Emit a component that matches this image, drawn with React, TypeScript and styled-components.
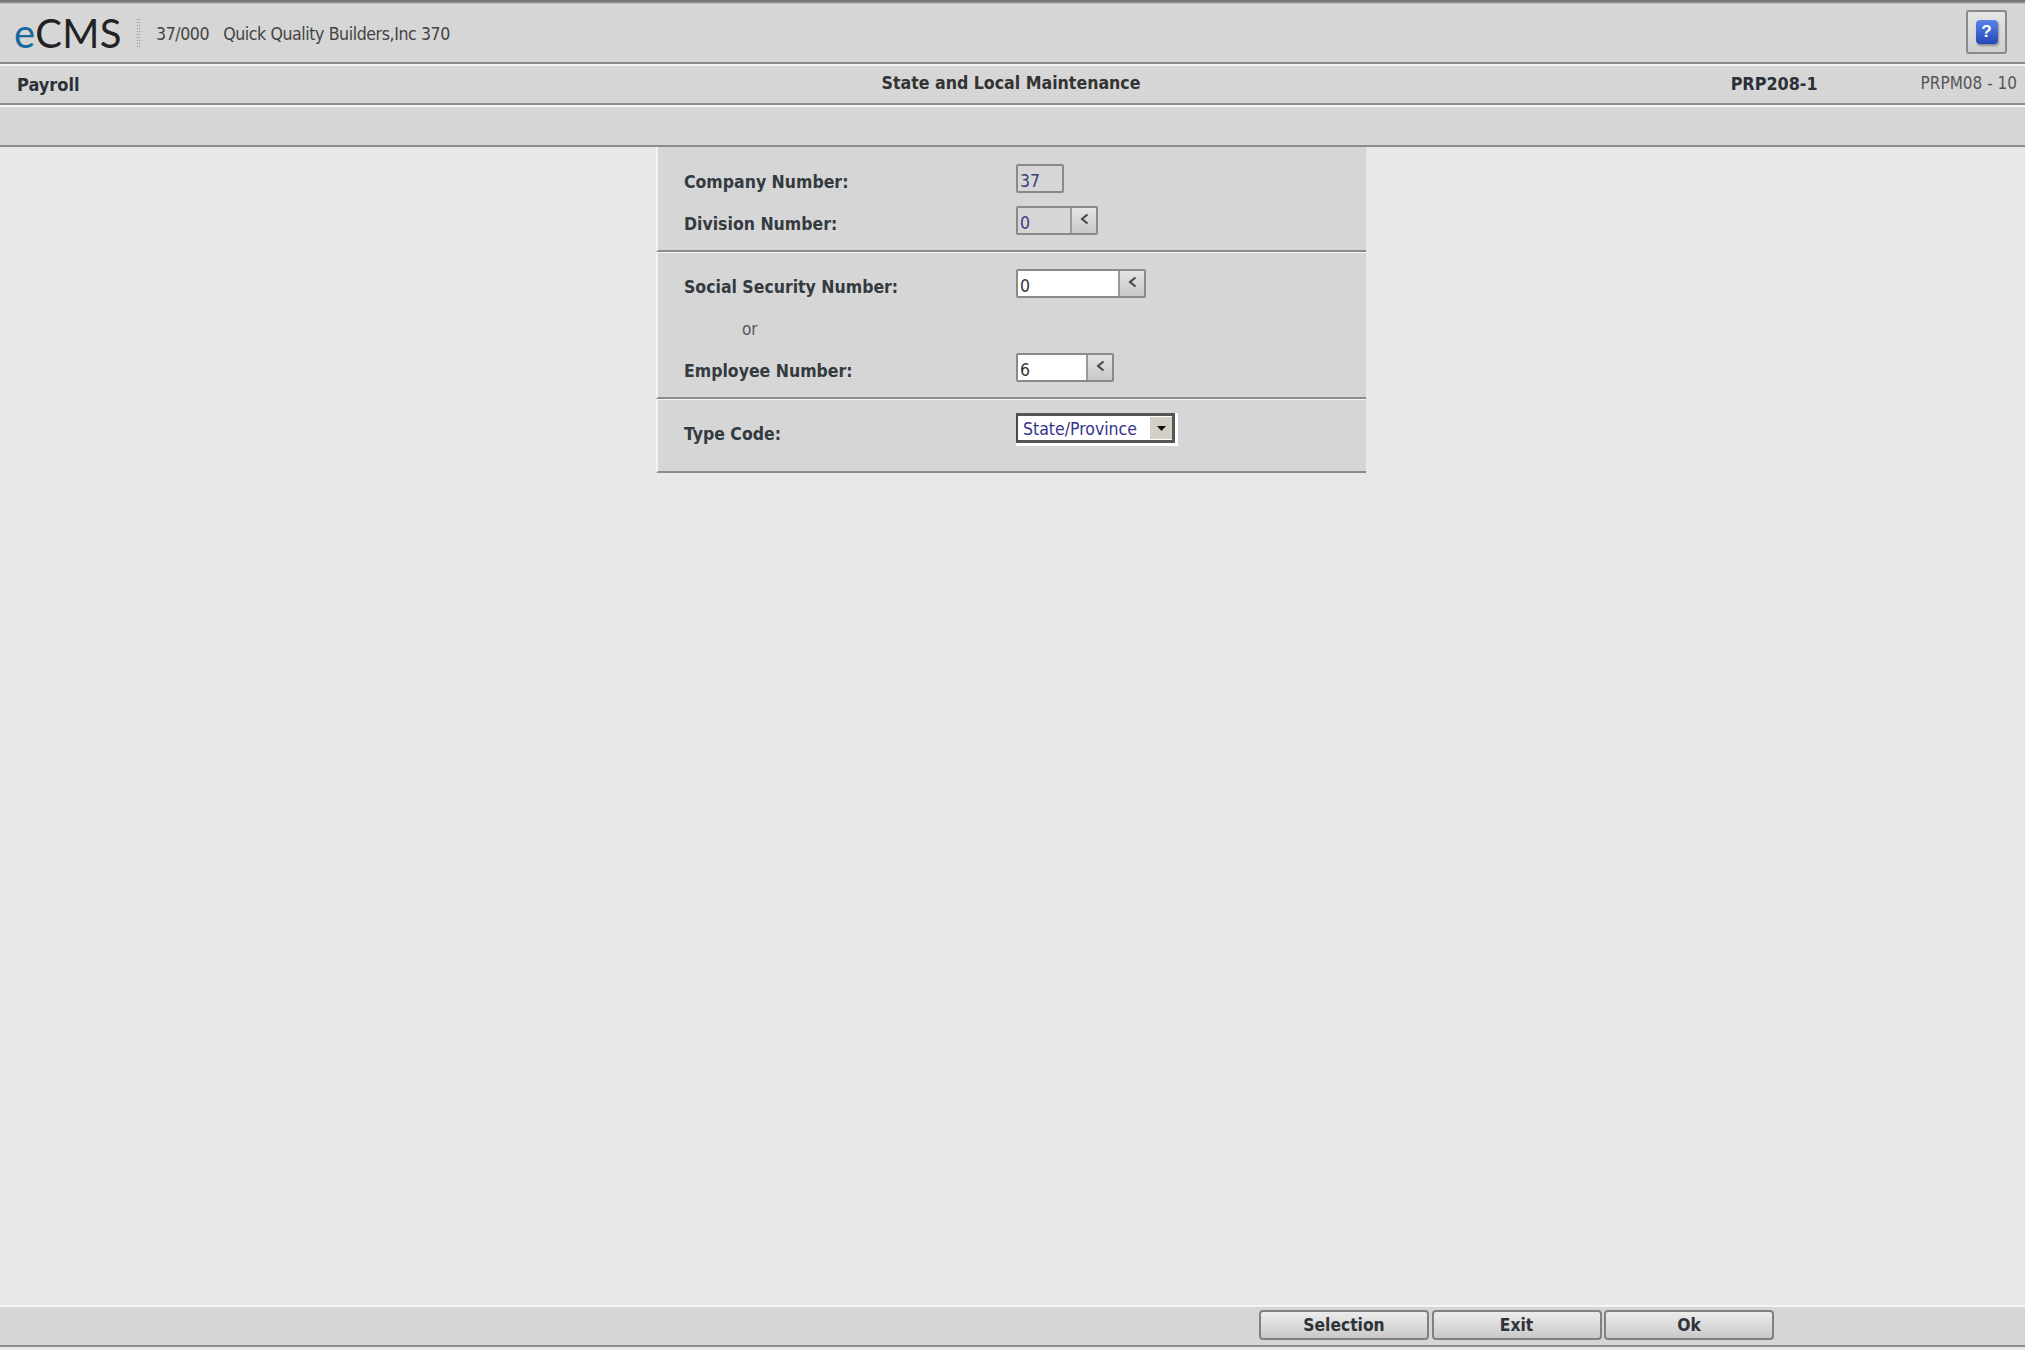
import React from "react";
import styled, { createGlobalStyle } from "styled-components";

const Global = createGlobalStyle`
  html, body { margin: 0; padding: 0; height: 100%; background: #e8e8e8; }
  #root { height: 100%; }
`;
const FONT = `"DejaVu Sans Condensed", "DejaVu Sans", sans-serif`;

const Page = styled.div`
  height: 1350px; display: flex; flex-direction: column; font-family: ${FONT}; color: #333; overflow: hidden;
`;
const TopEdge = styled.div`
  height: 4px; background: linear-gradient(#6e6e6e, #8a8a8a 60%, #d6d6d6);
`;
const Bar = styled.div<{ $h: number }>`
  height: ${(p) => p.$h}px; box-sizing: border-box; background: #d6d6d6; flex: none;
  border-bottom: 2px solid #8c8c8c; box-shadow: 0 2px 0 #f4f4f4; margin-bottom: 2px;
`;
const Header = styled(Bar)`
  display: flex; align-items: center; padding: 2px 18px 0 14px;
`;
const Logo = styled.div`
  font-family: Lato, sans-serif; font-weight: 400; font-size: 40px; line-height: 1; color: #222; width: 122px; letter-spacing: 0.3px; margin-top: -2px;
  span { color: #15689f; }
`;
const Dots = styled.div`
  width: 5px; height: 30px; margin: -2px 15px 0 0; flex: none;
  background-image: radial-gradient(#8f8f8f 40%, transparent 48%); background-size: 2.5px 3px;
`;
const Company = styled.span`
  font-size: 17.6px; color: #444; letter-spacing: -0.42px; margin-right: 14px; white-space: nowrap;
`;
const Help = styled.div`
  margin: 4px 0 0 auto; align-self: flex-start; width: 41px; height: 44px; box-sizing: border-box; border: 2px solid #8a8a8a; border-radius: 3px;
  background: linear-gradient(#e6e6e6, #cfcfcf); display: flex; align-items: center; justify-content: center;
`;
const HelpIcon = styled.div`
  width: 22px; height: 24px; border-radius: 4px; background: linear-gradient(#5b84e6, #2348b8);
  color: #fff; font-family: "Liberation Sans", sans-serif; font-weight: 700; font-size: 17px; line-height: 24px; text-align: center;
  box-shadow: 1px 2px 2px #8f8f8f;
`;
const SubHeader = styled(Bar)`
  display: grid; grid-template-columns: 1fr 1fr 1fr; align-items: center; padding: 0 8px 3px 5px;
`;
const Module = styled.div`
  font-size: 18px; font-weight: 700; color: #2c3038; padding: 2px 0 0 12px;
`;
const Title = styled.div`
  font-size: 17.6px; font-weight: 700; text-align: center; color: #333; white-space: nowrap;
`;
const Codes = styled.div`
  display: flex; justify-content: flex-end; align-items: center; white-space: nowrap;
`;
const ProgramCode = styled.div`
  font-size: 17.8px; font-weight: 700; color: #2c3038; margin-right: 103px;
`;
const ScreenCode = styled.div`
  font-size: 17px; color: #555;
`;
const Toolbar = styled(Bar)`
  box-shadow: none; margin-bottom: 0;
`;
const Main = styled.main`
  flex: 1; display: flex; justify-content: center; align-items: flex-start; padding-right: 3px;
`;
const Panel = styled.div`
  width: 710px;
`;
const Section = styled.section<{ $pt: number; $pb: number }>`
  background: #d6d6d6; padding: ${(p) => p.$pt}px 0 ${(p) => p.$pb}px 26px;
  border-left: 2px solid #f4f4f4; border-bottom: 2px solid #8c8c8c; box-shadow: 0 1px 0 #f4f4f4; margin-bottom: 1px;
  display: flex; flex-direction: column;
  &:last-child { box-shadow: none; }
`;
const Row = styled.div<{ $gap?: number }>`
  display: grid; grid-template-columns: 332px auto; justify-content: start; height: 29px; margin-top: ${(p) => p.$gap ?? 0}px;
`;
const Label = styled.label<{ $drop?: number }>`
  font-size: 17.5px; font-weight: 700; color: #333a40; line-height: 29px; padding-top: ${(p) => p.$drop ?? 4}px; white-space: nowrap;
`;
const Or = styled.div`
  font-size: 17px; color: #555; margin: 20px 0 12px 58px; line-height: 23px;
`;
const Field = styled.div`
  display: flex; height: 29px; box-sizing: border-box; border: 2px solid #8a8a8a; border-radius: 2px; align-self: start; overflow: hidden;
`;
const Input = styled.input<{ $w: number; $ro?: boolean }>`
  width: ${(p) => p.$w}px; border: 0; outline: 0; margin: 0; padding: 5px 0 0 2px; box-sizing: border-box; height: 100%;
  background: ${(p) => (p.$ro ? "#d6d6d6" : "#fff")}; color: ${(p) => (p.$ro ? "#3b3b7a" : "#333")};
  font-family: ${FONT}; font-size: 17.5px;
`;
const Lookup = styled.div`
  width: 24px; flex: none; border-left: 2px solid #9a9a9a; background: linear-gradient(#e4e4e4, #c8c8c8);
  display: flex; align-items: center; justify-content: center; color: #444; padding-bottom: 4px;
`;
const SelectBox = styled.div`
  width: 162px; height: 33px; box-sizing: border-box; background: #fff; padding: 0 3px 3px 0; display: flex;
`;
const SelectInner = styled.div`
  flex: 1; border: 3px solid #555; border-left: 2px solid #4a4a4a;
  display: flex; align-items: center; justify-content: space-between; padding: 2px 0 0 5px;
  font-size: 17.5px; color: #34348a; white-space: nowrap;
`;
const SelectArrow = styled.div`
  width: 22px; height: 100%; margin-top: -2px; background: #d4d0c8; border-left: 1px solid #fff; display: flex; align-items: center; justify-content: center;
`;
const Footer = styled.footer`
  flex: none; height: 42px; box-sizing: border-box; background: #d6d6d6; border-top: 2px solid #f4f4f4; border-bottom: 2px solid #8c8c8c;
  margin-bottom: 3px; display: flex; align-items: center; gap: 2.5px; padding: 0 0 2px 1259px;
`;
const Btn = styled.button`
  width: 170px; height: 30px; box-sizing: border-box; border: 2px solid #808080; border-radius: 4px; padding: 0;
  background: linear-gradient(#ececec, #c9c9c9); font-family: ${FONT}; font-size: 17.3px; font-weight: 700; color: #2f333a;
`;

const Chevron = () => (
  <svg width="9" height="12" viewBox="0 0 9 12" fill="none" stroke="#444" strokeWidth="2"><path d="M7.5 1.5 2 6l5.5 4.5" /></svg>
);

export default function App() {
  return (
    <Page>
      <Global />
      <TopEdge />
      <Header $h={60}>
        <Logo><span>e</span>CMS</Logo>
        <Dots />
        <Company>37/000</Company>
        <Company>Quick Quality Builders,Inc 370</Company>
        <Help><HelpIcon>?</HelpIcon></Help>
      </Header>
      <SubHeader $h={39}>
        <Module>Payroll</Module>
        <Title>State and Local Maintenance</Title>
        <Codes>
          <ProgramCode>PRP208-1</ProgramCode>
          <ScreenCode>PRPM08 - 10</ScreenCode>
        </Codes>
      </SubHeader>
      <Toolbar $h={40} />
      <Main>
        <Panel>
          <Section $pt={17} $pb={15}>
            <Row>
              <Label>Company Number:</Label>
              <Field><Input $w={44} $ro readOnly value="37" /></Field>
            </Row>
            <Row $gap={13}>
              <Label>Division Number:</Label>
              <Field><Input $w={52} $ro readOnly value="0" /><Lookup><Chevron /></Lookup></Field>
            </Row>
          </Section>
          <Section $pt={16} $pb={15}>
            <Row>
              <Label>Social Security Number:</Label>
              <Field><Input $w={100} readOnly value="0" /><Lookup><Chevron /></Lookup></Field>
            </Row>
            <Or>or</Or>
            <Row>
              <Label>Employee Number:</Label>
              <Field><Input $w={68} readOnly value="6" /><Lookup><Chevron /></Lookup></Field>
            </Row>
          </Section>
          <Section $pt={13} $pb={29}>
            <Row>
              <Label $drop={7}>Type Code:</Label>
              <SelectBox>
                <SelectInner>
                  State/Province
                  <SelectArrow>
                    <svg width="9" height="5" viewBox="0 0 9 5"><path d="M0 0h9L4.5 5z" fill="#111" /></svg>
                  </SelectArrow>
                </SelectInner>
              </SelectBox>
            </Row>
          </Section>
        </Panel>
      </Main>
      <Footer>
        <Btn>Selection</Btn>
        <Btn>Exit</Btn>
        <Btn>Ok</Btn>
      </Footer>
    </Page>
  );
}
